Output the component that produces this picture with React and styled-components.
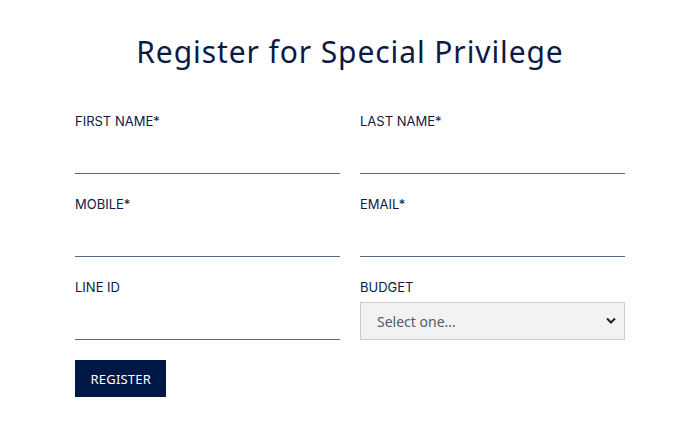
import React from "react";
import styled, { createGlobalStyle } from "styled-components";

const Global = createGlobalStyle`
  body {
    margin: 0;
    background: #fff;
    font-family: Inter, "Noto Sans", sans-serif;
  }
`;

const Page = styled.div`
  width: 700px;
  height: 425px;
  box-sizing: border-box;
  padding-top: 32px;
`;

const Title = styled.h1`
  margin: 0;
  text-align: center;
  font-family: "Noto Sans", sans-serif;
  font-weight: 400;
  font-size: 30px;
  line-height: 40px;
  letter-spacing: 0.9px;
  color: #0b1b45;
`;

const Form = styled.form`
  width: 550px;
  margin: 40px auto 0;
  display: grid;
  grid-template-columns: 1fr 1fr;
  column-gap: 20px;
  row-gap: 21px;
`;

const Field = styled.div`
  display: flex;
  flex-direction: column;
`;

const Label = styled.label`
  font-size: 13px;
  line-height: 18px;
  color: #0b1b45;
  margin-bottom: ${(p) => (p.tight ? 6 : 8)}px;
`;

const Input = styled.input`
  height: 36px;
  box-sizing: border-box;
  border: none;
  border-bottom: 1px solid #5b6888;
  outline: none;
  padding: 0;
  font: inherit;
  background: transparent;
`;

const SelectWrap = styled.div`
  position: relative;
  height: 38px;
  box-sizing: border-box;
  border: 1px solid #cccccc;
  background: #f2f2f2;
  display: flex;
  align-items: center;
  padding-left: 16px;
  font-family: "Noto Sans", sans-serif;
  font-size: 14px;
  color: #555a66;
`;

const Chevron = styled.svg`
  position: absolute;
  right: 8px;
  top: 14px;
`;

const Button = styled.button`
  margin-top: 20px;
  margin-left: 75px;
  height: 37px;
  padding: 0 15.5px;
  border: none;
  background: #001845;
  color: #fff;
  font-family: "Noto Sans", sans-serif;
  font-size: 13px;
  letter-spacing: 0.2px;
`;

export default function App() {
  return (
    <Page>
      <Global />
      <Title>Register for Special Privilege</Title>
      <Form>
        <Field>
          <Label>FIRST NAME*</Label>
          <Input />
        </Field>
        <Field>
          <Label>LAST NAME*</Label>
          <Input />
        </Field>
        <Field>
          <Label>MOBILE*</Label>
          <Input />
        </Field>
        <Field>
          <Label>EMAIL*</Label>
          <Input />
        </Field>
        <Field>
          <Label>LINE ID</Label>
          <Input />
        </Field>
        <Field>
          <Label tight>BUDGET</Label>
          <SelectWrap>
            Select one...
            <Chevron width="10" height="8" viewBox="0 0 10 8">
              <path d="M1 1.5 L5 5.5 L9 1.5" fill="none" stroke="#222" strokeWidth="2" />
            </Chevron>
          </SelectWrap>
        </Field>
      </Form>
      <Button type="button">REGISTER</Button>
    </Page>
  );
}
